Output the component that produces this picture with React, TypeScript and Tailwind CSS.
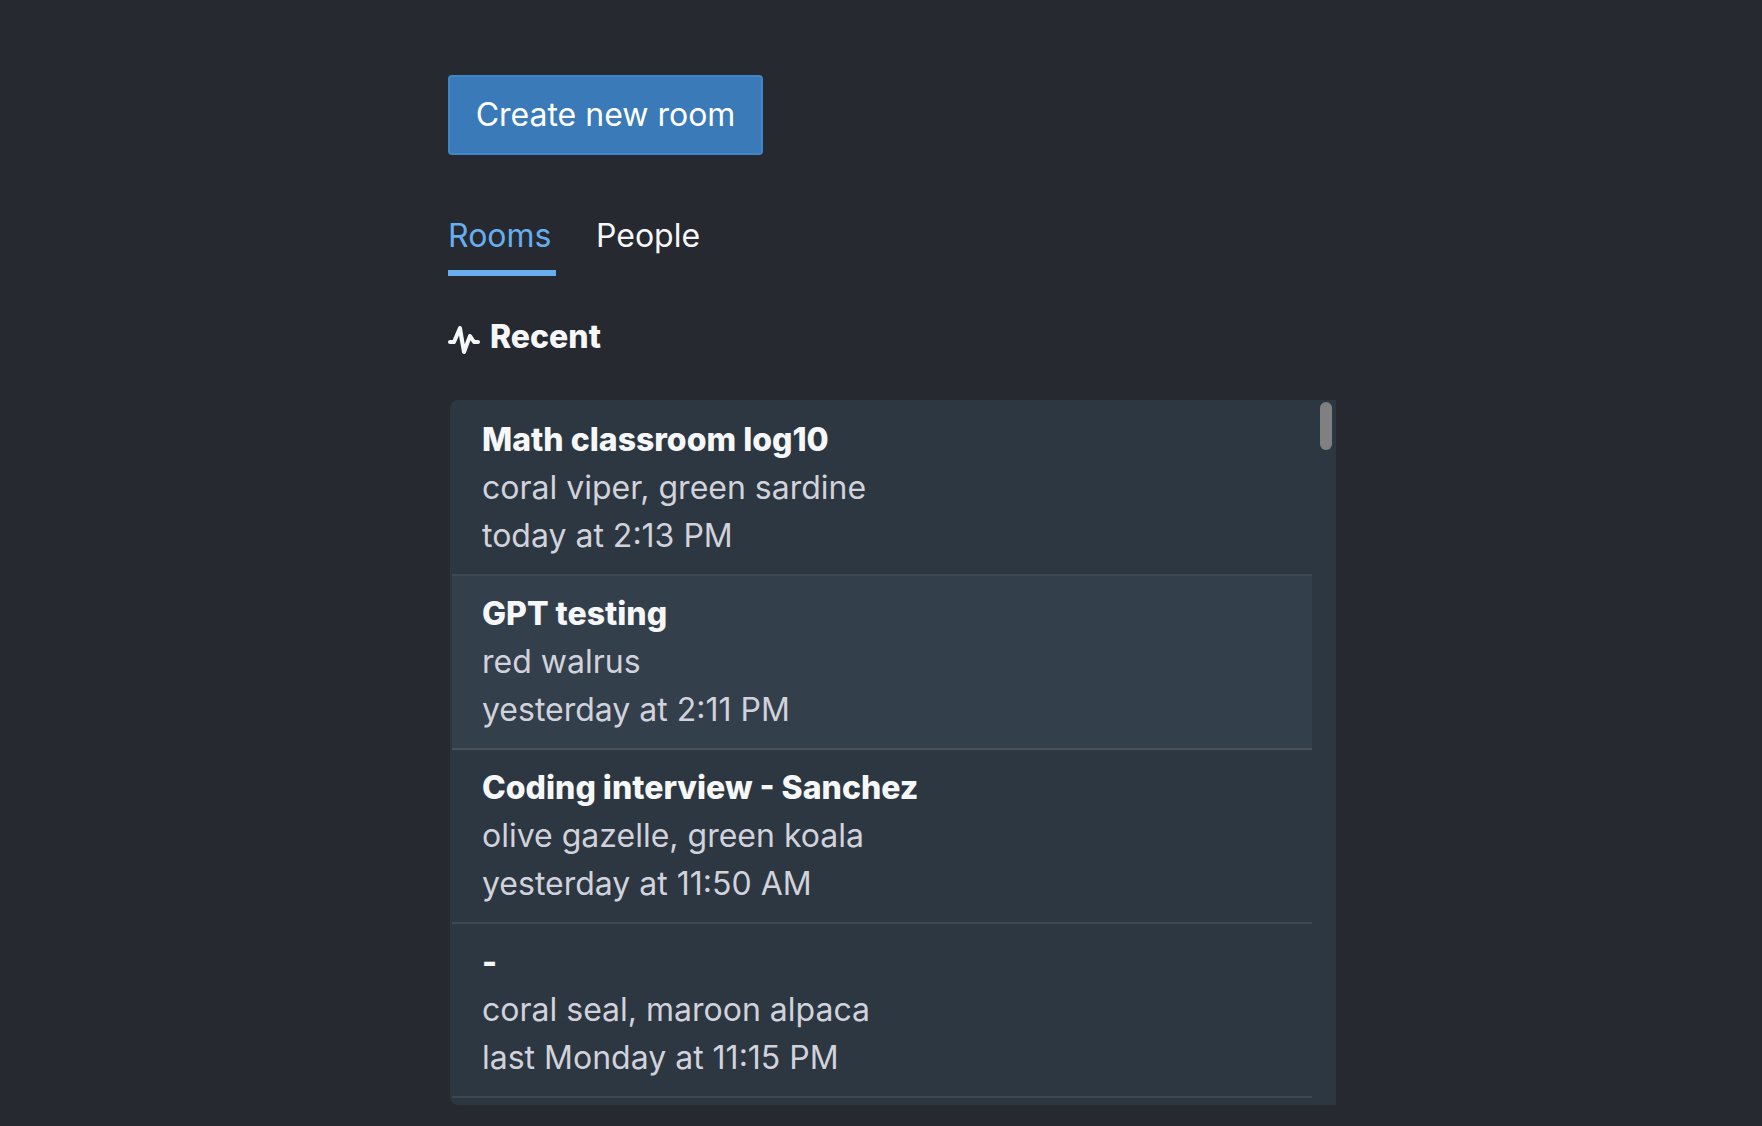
const rooms = [
  { name: "Math classroom log10", people: "coral viper, green sardine", time: "today at 2:13 PM", active: false },
  { name: "GPT testing", people: "red walrus", time: "yesterday at 2:11 PM", active: true },
  { name: "Coding interview - Sanchez", people: "olive gazelle, green koala", time: "yesterday at 11:50 AM", active: false },
  { name: "-", people: "coral seal, maroon alpaca", time: "last Monday at 11:15 PM", active: false },
];

function PulseIcon() {
  return (
    <svg viewBox="0 0 16 16" className="mt-[6px] size-8" fill="currentColor" aria-hidden="true">
      <path d="M15 8h-1.46l-1.7-2.55-.02.01A.984.984 0 0011 5c-.43 0-.79.27-.93.65h-.01l-1.69 4.51-1.38-8.32h-.02A.989.989 0 006 1c-.41 0-.77.25-.92.61L2.34 8H1c-.55 0-1 .45-1 1s.45 1 1 1h2c.41 0 .77-.25.92-.61l1.57-3.66 1.52 8.41h.02c.07.48.47.86.98.86.43 0 .79-.27.93-.65h.01l2.31-6.17.92 1.38.02-.01c.17.26.46.45.81.45h2c.55 0 1-.45 1-1s-.45-1-1-1z" />
    </svg>
  );
}

export default function App() {
  return (
    <main className="min-h-screen bg-[#262930] px-8 pt-[75px] pb-5 font-[Inter,sans-serif] text-[32px] leading-[48px] text-[#f6f7f9]">
      <div className="mx-auto max-w-[866px]">
        <button type="button" className="min-w-[315px] rounded border-2 border-[#3f86c6] bg-[#3a7ab8] px-[18px] py-[14px] text-white">
          Create new room
        </button>

        <div role="tablist" className="mt-[57px] flex gap-10">
          <button type="button" role="tab" aria-selected="true" className="min-w-[108px] border-b-6 border-[#68aeee] pb-[10px] text-left text-[#68aeee]">
            Rooms
          </button>
          <button type="button" role="tab" aria-selected="false" className="min-w-[108px] border-b-6 border-transparent pb-[10px] text-left">
            People
          </button>
        </div>

        <h2 className="mt-[37px] flex items-center gap-[10px] font-extrabold">
          <PulseIcon />
          Recent
        </h2>

        <div className="relative -mr-[22px] mt-[39px] ml-[2px] rounded-l-lg bg-[#2d3741] pt-[2px] pr-6 pb-[7px] pl-[2px]">
          <ul>
            {rooms.map((room) => (
              <li key={room.time} className={room.active ? "border-b-2 border-[#46515c] bg-[#333f4b]" : "border-b-2 border-[#3f4852]"}>
                <a href="#" className="block px-[30px] py-[14px]">
                  <div className="font-extrabold">{room.name}</div>
                  <div className="text-[#d1d2dc]">{room.people}</div>
                  <div className="text-[#d1d2dc]">{room.time}</div>
                </a>
              </li>
            ))}
          </ul>
          <div className="absolute top-[2px] right-1 h-12 w-3 rounded-full bg-[#808080]" />
        </div>
      </div>
    </main>
  );
}
